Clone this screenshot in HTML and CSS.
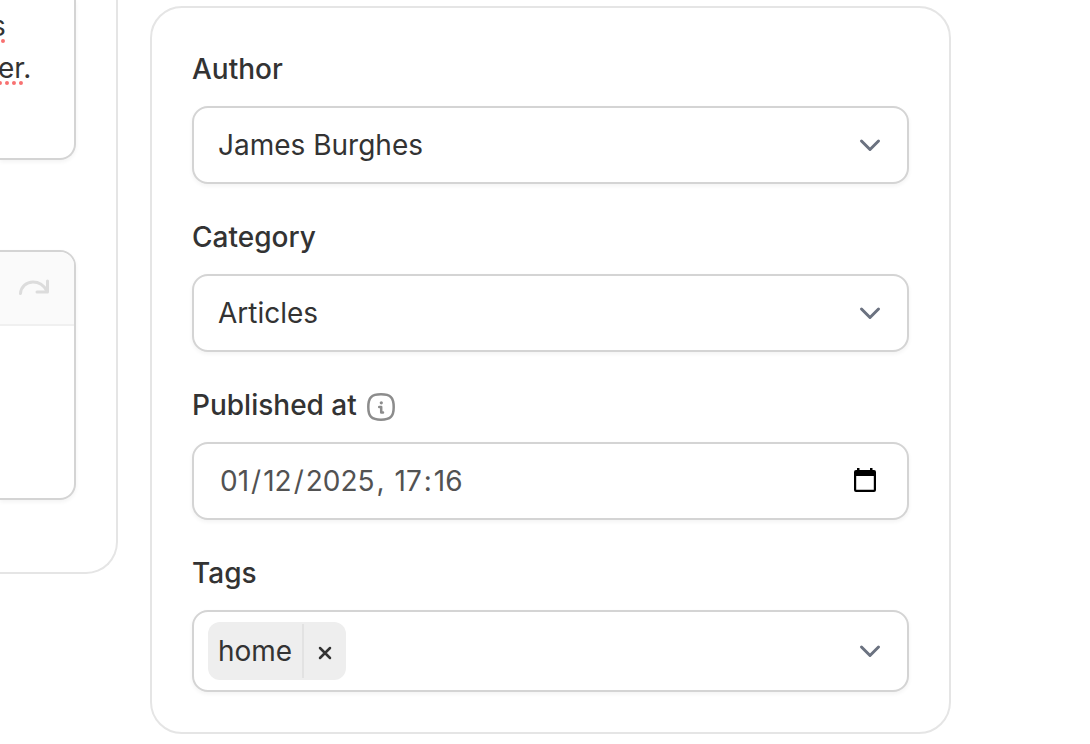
FILE: index.html
```
<!DOCTYPE html>
<html lang="en">
<head>
    <meta charset="UTF-8">
    <meta name="viewport" content="width=device-width, initial-scale=1.0">
    <title>Edit article</title>
    <link rel="stylesheet" href="styles.css">
</head>
<body>

    <main class="layout">
        <section class="card card-content">
            <div class="text-field" role="textbox" aria-multiline="true" aria-label="Summary" contenteditable="true" spellcheck="false">
                <p class="line line-first"><span class="misspelled">s</span></p>
                <p class="line"><span class="misspelled">er</span>.</p>
            </div>

            <div class="editor">
                <div class="toolbar">
                    <button type="button" class="icon-button" aria-label="Redo" disabled>
                        <svg width="32" height="18" viewBox="0 0 32 18" fill="none" stroke="currentColor" stroke-width="3" stroke-linecap="round" stroke-linejoin="round">
                            <path d="M2.500 14.500C3 7.500 8.500 3 15 3C21 3 26 6.500 29 12M29.500 2V13H19"/>
                        </svg>
                    </button>
                </div>
                <div class="editor-body" role="textbox" aria-label="Content" contenteditable="true"></div>
            </div>
        </section>

        <form class="card card-details">
            <div class="field">
                <label for="author">Author</label>
                <div class="control">
                    <select id="author" name="author">
                        <option>James Burghes</option>
                    </select>
                    <svg class="chevron" width="24" height="16" viewBox="0 0 24 16" fill="none" stroke="currentColor" stroke-width="3" stroke-linecap="round" stroke-linejoin="round"><path d="M3.500 4L12 12.500L20.500 4"/></svg>
                </div>
            </div>

            <div class="field">
                <label for="category">Category</label>
                <div class="control">
                    <select id="category" name="category">
                        <option>Articles</option>
                    </select>
                    <svg class="chevron" width="24" height="16" viewBox="0 0 24 16" fill="none" stroke="currentColor" stroke-width="3" stroke-linecap="round" stroke-linejoin="round"><path d="M3.500 4L12 12.500L20.500 4"/></svg>
                </div>
            </div>

            <div class="field">
                <div class="label-row">
                    <label for="published" id="published-label">Published at</label>
                    <button type="button" class="icon-button info" aria-label="More information">
                        <svg width="28" height="28" viewBox="0 0 28 28" fill="none" stroke="currentColor" stroke-width="2.500" stroke-linecap="round" stroke-linejoin="round">
                            <path d="M14 1.300C23.500 1.300 26.700 4.500 26.700 14S23.500 26.700 14 26.700S1.300 23.500 1.300 14S4.500 1.300 14 1.300Z"/>
                            <path d="M12.200 14H14.200V19.500H16" stroke-width="2.500"/>
                            <circle cx="14.300" cy="9.800" r="1.600" fill="currentColor" stroke="none"/>
                        </svg>
                    </button>
                </div>
                <div class="control control-date">
                    <div class="date-parts" role="group" aria-labelledby="published-label">
                        <input type="text" id="published" name="day" value="01" maxlength="2" aria-label="Day"><span>/</span>
                        <input type="text" name="month" value="12" maxlength="2" aria-label="Month"><span>/</span>
                        <input type="text" name="year" value="2025" maxlength="4" aria-label="Year"><span class="comma">, </span>
                        <input type="text" name="hour" value="17" maxlength="2" aria-label="Hour"><span>:</span>
                        <input type="text" name="minute" value="16" maxlength="2" aria-label="Minute">
                    </div>
                    <button type="button" class="icon-button calendar" aria-label="Pick a date">
                        <svg width="24" height="28" viewBox="0 0 24 28" fill="currentColor">
                            <path fill-rule="evenodd" d="M4 1H6.500V3H17V1H19.500V3H21Q23 3 23 5V23Q23 25 21 25H3Q1 25 1 23V5Q1 3 3 3H4ZM3.200 9V22.800H20.800V9Z"/>
                        </svg>
                    </button>
                </div>
            </div>

            <div class="field">
                <label for="tags">Tags</label>
                <div class="control control-tags">
                    <span class="tag">
                        <span class="tag-name">home</span>
                        <button type="button" class="tag-remove" aria-label="Remove home">
                            <svg width="14" height="14" viewBox="0 0 14 14" fill="none" stroke="currentColor" stroke-width="2.500" stroke-linecap="round"><path d="M2 2L12 12M12 2L2 12"/></svg>
                        </button>
                    </span>
                    <input type="text" id="tags" name="tags">
                    <svg class="chevron" width="24" height="16" viewBox="0 0 24 16" fill="none" stroke="currentColor" stroke-width="3" stroke-linecap="round" stroke-linejoin="round"><path d="M3.500 4L12 12.500L20.500 4"/></svg>
                </div>
            </div>
        </form>
    </main>

</body>
</html>
```
FILE: styles.css
```
* {
    box-sizing: border-box;
}
body {
    margin: 0;
    background-color: #fff;
    color: #333;
    font-family: Inter, "Liberation Sans", sans-serif;
    font-size: 28px;
    line-height: 42px;
}
button, input, select {
    font: inherit;
    color: inherit;
}
.layout {
    display: grid;
    grid-template-columns: 118px minmax(0, 1fr);
    align-items: start;
    gap: 32px;
    padding-right: 139px;
}
.card {
    border: 2px solid #e5e5e5;
    border-radius: 32px;
    padding: 40px;
}
.card-content {
    border-width: 0 2px 2px 0;
    border-radius: 0 0 32px 0;
    padding: 0 40px 72px 0;
}
.text-field, .editor {
    border: 2px solid #d4d4d4;
    border-left: none;
    box-shadow: 0 2px 4px rgba(0, 0, 0, 0.05);
}
.text-field {
    border-top: none;
    border-radius: 0 0 16px 0;
    padding: 5px 0 69px;
    margin-bottom: 90px;
    overflow: hidden;
}
.line {
    margin: 0;
    text-indent: -2px;
}
.line-first {
    text-indent: -9px;
}
.misspelled {
    text-decoration: underline dotted #f87171 4px;
    text-underline-offset: 3px;
    text-decoration-skip-ink: none;
}
.editor {
    border-radius: 0 16px 16px 0;
    overflow: hidden;
}
.toolbar {
    display: flex;
    justify-content: flex-end;
    align-items: center;
    height: 74px;
    padding-right: 24px;
    border-bottom: 2px solid #f0f0f0;
    background-color: #fafafa;
    color: #dcdcdc;
}
.editor-body {
    min-height: 172px;
}
.icon-button {
    display: flex;
    padding: 0;
    border: none;
    background: none;
    color: inherit;
}
.card-details {
    display: flex;
    flex-direction: column;
    gap: 32px;
    margin-top: 6px;
}
.field {
    display: flex;
    flex-direction: column;
    gap: 16px;
}
.field label {
    font-weight: 500;
}
.label-row {
    display: flex;
    align-items: center;
    gap: 10px;
}
.info {
    padding-top: 4px;
    color: #8c8c8c;
}
.control {
    display: flex;
    align-items: center;
    position: relative;
    min-height: 78px;
    border: 2px solid #d4d4d4;
    border-radius: 16px;
    background-color: #fff;
    box-shadow: 0 2px 4px rgba(0, 0, 0, 0.05);
}
.control select {
    appearance: none;
    width: 100%;
    height: 74px;
    padding: 0 64px 0 24px;
    border: none;
    border-radius: 14px;
    background: none;
}
.control input {
    flex: 1;
    min-width: 0;
    padding: 0;
    border: none;
    background: none;
}
.chevron {
    position: absolute;
    right: 25px;
    color: #6b7280;
    pointer-events: none;
}
.control-date {
    justify-content: space-between;
    padding: 0 30px 0 24px;
    color: #525252;
}
.date-parts {
    display: flex;
}
.date-parts input {
    flex: none;
    field-sizing: content;
    padding: 0 2px;
}
.comma {
    white-space: pre;
}
.calendar {
    color: #000;
}
.control-tags {
    min-height: 82px;
    padding: 10px 64px 10px 14px;
}
.tag {
    display: flex;
    align-items: center;
    height: 58px;
    padding: 2px 0;
    border-radius: 12px;
    background-color: #eee;
}
.tag-name {
    padding: 0 10px;
}
.tag-remove {
    display: flex;
    align-items: center;
    align-self: stretch;
    padding: 4px 14px 0;
    border: none;
    border-left: 2px solid #e2e2e2;
    background: none;
}
```
